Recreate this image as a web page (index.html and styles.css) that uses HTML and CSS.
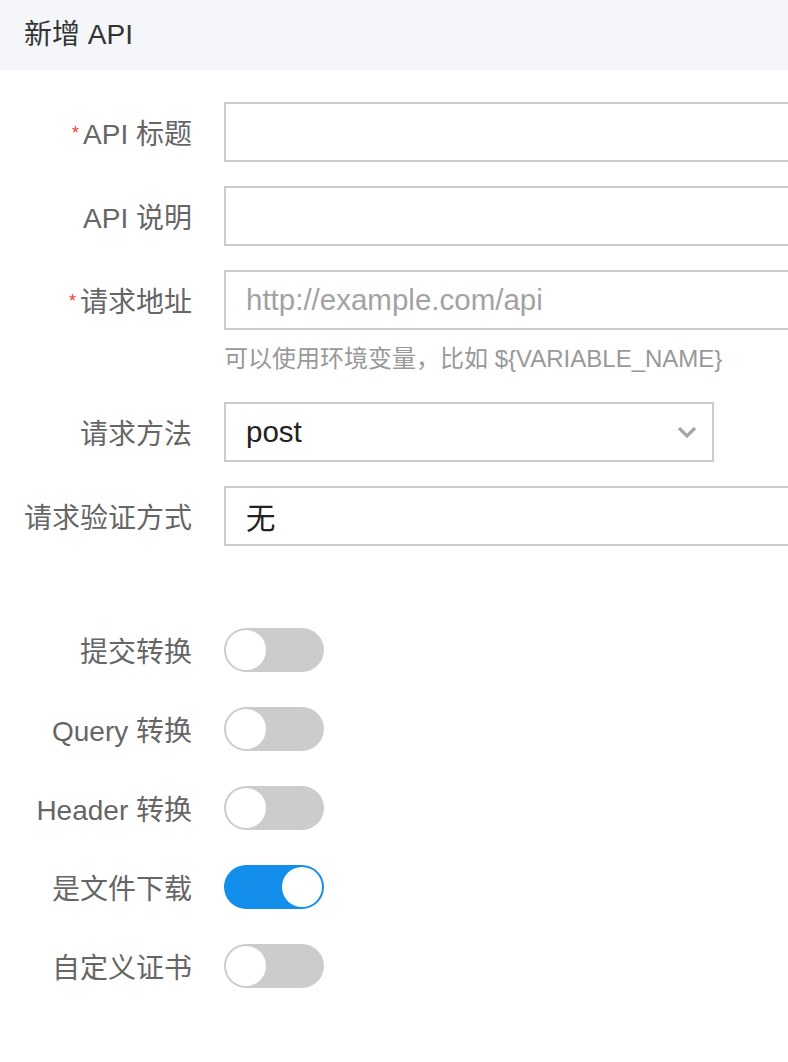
FILE: index.html
```html
<!DOCTYPE html>
<html lang="zh-CN">
<head>
<meta charset="utf-8">
<title>新增 API</title>
<link rel="stylesheet" href="styles.css">
</head>
<body>
<div class="page">
  <header class="page-header">新增 API</header>
  <form class="form">
    <div class="form-item">
      <label class="form-label required">API 标题</label>
      <div class="form-control"><input class="input" type="text"></div>
    </div>
    <div class="form-item">
      <label class="form-label">API 说明</label>
      <div class="form-control"><input class="input" type="text"></div>
    </div>
    <div class="form-item">
      <label class="form-label required">请求地址</label>
      <div class="form-control"><input class="input" type="text" placeholder="http://example.com/api"></div>
    </div>
    <div class="form-help">可以使用环境变量，比如 ${VARIABLE_NAME}</div>
    <div class="form-item">
      <label class="form-label">请求方法</label>
      <div class="form-control">
        <div class="select">
          <span class="select-value">post</span>
          <svg class="select-arrow" width="20" height="12" viewBox="0 0 20 12"><path d="M2 2 L10 10 L18 2" fill="none" stroke="#a6a6a6" stroke-width="3.2"/></svg>
        </div>
      </div>
    </div>
    <div class="form-item">
      <label class="form-label">请求验证方式</label>
      <div class="form-control"><div class="input input-static">无</div></div>
    </div>

    <div class="switch-group">
      <div class="form-item switch-item">
        <label class="form-label">提交转换</label>
        <div class="form-control"><span class="switch"><span class="knob"></span></span></div>
      </div>
      <div class="form-item switch-item">
        <label class="form-label">Query 转换</label>
        <div class="form-control"><span class="switch"><span class="knob"></span></span></div>
      </div>
      <div class="form-item switch-item">
        <label class="form-label">Header 转换</label>
        <div class="form-control"><span class="switch"><span class="knob"></span></span></div>
      </div>
      <div class="form-item switch-item">
        <label class="form-label">是文件下载</label>
        <div class="form-control"><span class="switch switch-on"><span class="knob"></span></span></div>
      </div>
      <div class="form-item switch-item">
        <label class="form-label">自定义证书</label>
        <div class="form-control"><span class="switch"><span class="knob"></span></span></div>
      </div>
    </div>
  </form>
</div>
</body>
</html>
```

FILE: styles.css
```css
html, body {
  margin: 0;
  padding: 0;
  overflow: hidden;
  background: #fff;
}

body {
  font-family: "Liberation Sans", "Noto Sans CJK SC", sans-serif;
  font-size: 28px;
  color: #333;
}

.page {
  width: 788px;
  overflow: hidden;
}

.page-header {
  height: 70px;
  display: flex;
  align-items: center;
  padding: 0 24px 6px;
  background: #f5f6fa;
  color: #333;
  font-size: 28px;
  box-sizing: border-box;
}

.form {
  padding-top: 32px;
  display: flex;
  flex-direction: column;
}

.form-item {
  display: flex;
  align-items: center;
  margin-bottom: 24px;
}

.form-label {
  width: 224px;
  flex: none;
  box-sizing: border-box;
  padding-right: 32px;
  text-align: right;
  color: #666;
  font-size: 28px;
  white-space: nowrap;
}

.form-label.required::before {
  content: "*";
  color: #f04134;
  font-size: 18px;
  vertical-align: 5px;
  margin-right: 4px;
}

.form-control {
  flex: 1;
  min-width: 0;
}

.input {
  display: block;
  width: 600px;
  height: 60px;
  box-sizing: border-box;
  border: 2px solid #ccc;
  border-radius: 0;
  padding: 0 20px;
  font-family: inherit;
  font-size: 29.5px;
  color: #222;
  background: #fff;
  outline: none;
}

.input::placeholder {
  color: #a3a3a3;
}

.input-static {
  display: flex;
  align-items: center;
}

.form-help {
  margin: -24px 0 24px 224px;
  padding: 11px 0 1px;
  line-height: 36px;
  font-size: 24px;
  color: #999;
}

.select {
  width: 490px;
  height: 60px;
  box-sizing: border-box;
  border: 2px solid #ccc;
  padding: 0 15px 0 20px;
  display: flex;
  align-items: center;
  justify-content: space-between;
  font-size: 29.5px;
  color: #222;
}

.select-arrow {
  display: block;
}

.switch-group {
  margin-top: 58px;
  display: flex;
  flex-direction: column;
  gap: 35px;
}

.switch-item {
  margin-bottom: 0;
}

.switch {
  width: 100px;
  height: 44px;
  border-radius: 22px;
  background: #ccc;
  padding: 2px;
  box-sizing: border-box;
  display: flex;
  justify-content: flex-start;
}

.switch-on {
  background: #148eeb;
  justify-content: flex-end;
}

.knob {
  width: 40px;
  height: 40px;
  border-radius: 50%;
  background: #fff;
}
```
